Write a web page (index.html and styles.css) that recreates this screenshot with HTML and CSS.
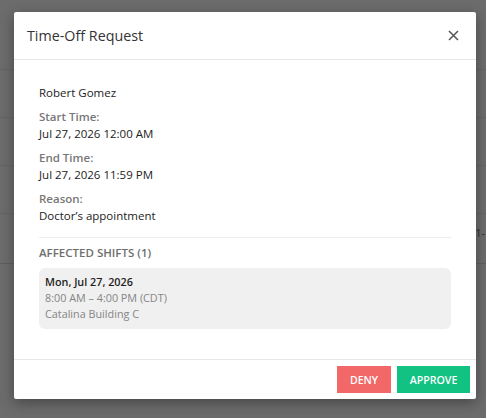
FILE: index.html
```html
<!DOCTYPE html>
<html lang="en">
<head>
    <meta charset="UTF-8">
    <meta name="viewport" content="width=device-width, initial-scale=1.0">
    <title>Time-Off Request</title>
    <link rel="stylesheet" href="styles.css">
</head>
<body>
    <!-- Page behind the dialog -->
    <div class="page">
        <div class="row"></div>
        <div class="row"></div>
        <div class="row"></div>
        <div class="row"></div>
        <div class="row row-cell"><span>1-</span></div>
    </div>

    <div class="overlay">
        <div class="modal">
            <div class="modal-header">
                <h2 class="modal-title">Time-Off Request</h2>
                <button class="close-btn" aria-label="Close">
                    <svg width="11" height="11" viewBox="0 0 11 11">
                        <path d="M1 1L10 10M10 1L1 10" stroke="#555" stroke-width="1.5" fill="none"/>
                    </svg>
                </button>
            </div>

            <div class="modal-body">
                <p class="name">Robert Gomez</p>

                <div class="field">
                    <div class="label">Start Time:</div>
                    <div class="value">Jul 27, 2026 12:00 AM</div>
                </div>
                <div class="field">
                    <div class="label">End Time:</div>
                    <div class="value">Jul 27, 2026 11:59 PM</div>
                </div>
                <div class="field">
                    <div class="label">Reason:</div>
                    <div class="value">Doctor’s appointment</div>
                </div>

                <div class="section">
                    <div class="section-title">AFFECTED SHIFTS (1)</div>
                    <div class="shift">
                        <div class="shift-date">Mon, Jul 27, 2026</div>
                        <div class="shift-info">8:00 AM – 4:00 PM (CDT)</div>
                        <div class="shift-info">Catalina Building C</div>
                    </div>
                </div>
            </div>

            <div class="modal-footer">
                <button class="btn btn-deny">DENY</button>
                <button class="btn btn-approve">APPROVE</button>
            </div>
        </div>
    </div>
</body>
</html>
```

FILE: styles.css
```css
* {
    margin: 0;
    padding: 0;
    box-sizing: border-box;
}

body {
    font-family: "Open Sans", "Liberation Sans", sans-serif;
    font-size: 11.5px;
    color: #222;
    background-color: #6c6c6c;
    overflow: hidden;
    height: 418px;
}

/* Fondo */
.page {
    display: flex;
    flex-direction: column;
    padding-top: 22px;
}

.row {
    height: 48px;
    border-bottom: 1px solid #646464;
}

.row-cell {
    height: 50px;
    display: flex;
    justify-content: flex-end;
    align-items: flex-start;
    padding-top: 11px;
    border-bottom-color: #5f5f5f;
}

.row-cell span {
    color: #2e2e2e;
    font-size: 11px;
    margin-right: 1px;
}

.overlay {
    position: absolute;
    inset: 0;
    padding: 12px 10px 0 14px;
}

/* Dialogo */
.modal {
    width: 462px;
    height: 387px;
    background-color: white;
    border-radius: 2px;
    box-shadow: 0 4px 14px rgba(0, 0, 0, 0.35);
    display: flex;
    flex-direction: column;
}

.modal-header {
    height: 48px;
    display: flex;
    align-items: center;
    justify-content: space-between;
    padding: 0 17px 0 13px;
    border-bottom: 1px solid #e6e6e6;
}

.modal-title {
    font-size: 14.3px;
    font-weight: 400;
    color: #333;
}

.close-btn {
    background: none;
    border: none;
    display: flex;
    cursor: pointer;
}

.modal-body {
    flex: 1;
    padding: 24px 25px 0 25px;
}

.name {
    line-height: 17px;
    margin-bottom: 7px;
}

.field {
    margin-bottom: 7px;
    line-height: 17px;
}

.label {
    font-weight: 600;
    color: #777;
}

.section {
    margin-top: 13px;
    border-top: 1px solid #ececec;
    padding-top: 6px;
}

.section-title {
    font-size: 11.5px;
    font-weight: 600;
    color: #6e6e6e;
    line-height: 17px;
    margin-bottom: 7px;
}

.shift {
    background-color: #f0f0f0;
    border-radius: 6px;
    padding: 6px 6px 7px;
    font-size: 10.8px;
    line-height: 16px;
}

.shift-date {
    font-weight: 600;
    color: #1e1e1e;
}

.shift-info {
    color: #858585;
}

/* Botones */
.modal-footer {
    height: 40px;
    border-top: 1px solid #e6e6e6;
    display: flex;
    justify-content: flex-end;
    align-items: center;
    gap: 6px;
    padding-right: 6px;
}

.btn {
    height: 27px;
    border: none;
    color: white;
    font-family: inherit;
    font-size: 10.6px;
    font-weight: 600;
    cursor: pointer;
}

.btn-deny {
    width: 54px;
    background-color: #f26767;
}

.btn-approve {
    width: 73px;
    background-color: #12c283;
}
```
